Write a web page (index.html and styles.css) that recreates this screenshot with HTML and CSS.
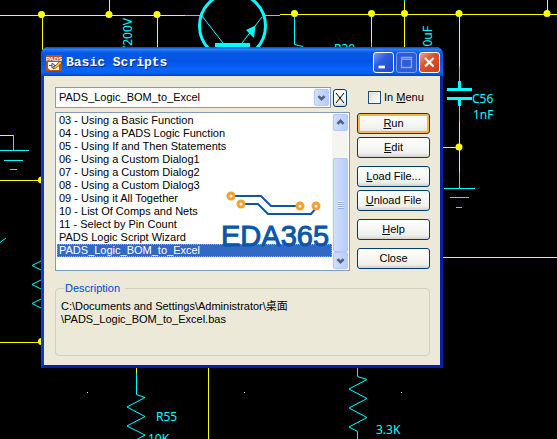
FILE: index.html
```html
<!DOCTYPE html>
<html lang="en">
  <head>
    <meta charset="utf-8">
    <title>Basic Scripts</title>
    <link rel="stylesheet" href="styles.css">
  </head>
  <body>
    <svg class="schematic" viewBox="0 0 557 439" preserveAspectRatio="xMinYMin slice" aria-hidden="true">
      <!-- wires -->
      <g class="wire">
        <path d="M0 15.5H185M280 14.5H557M42.5 15V50M109.5 0V15M157.5 15V50M371.5 15V43M404.5 2V50M459.5 15V66M547.5 0V14"/>
        <path d="M459.5 121V172M440 147.5H459M440 257.5H557M0 135.5H13M0 180.5H41M0 342.5H41M136.5 365V373M208.5 365V439"/>
      </g>
      <g class="node">
        <circle cx="41.5" cy="14.5" r="3.5"/>
        <circle cx="109" cy="14.5" r="3.5"/>
        <circle cx="157" cy="14.5" r="3.5"/>
        <circle cx="294.5" cy="13.5" r="3.5"/>
        <circle cx="371.5" cy="13.5" r="3.5"/>
        <circle cx="404.5" cy="13.5" r="3.5"/>
        <circle cx="459" cy="13.5" r="3.5"/>
        <circle cx="547" cy="13.5" r="3.5"/>
        <circle cx="459" cy="147" r="3.5"/>
        <circle cx="41.5" cy="180" r="3.5"/>
        <circle cx="41.5" cy="341.5" r="3.5"/>
      </g>
      <!-- parts -->
      <g class="part">
        <path d="M185 15.5H200M264 15.5H280M202 16L223 43M242 43L262 17M294.5 17V44.5L303 46.5"/>
        <path d="M371.5 43V50M404.5 0V2M459.5 66V82M459.5 105V121M459.5 172V188M444 188.5H475M450 197.5H469M456 207.5H462"/>
        <path d="M13.5 135V150M0 150.5H29M4 160.5H23M10 169.5H17M0 242.5L6 238"/>
        <path d="M41 261L32 265.5L41 270M41 280L32 284.5L41 289M41 299L32 303.5L41 308"/>
        <path d="M136.5 373V394.5L145 397.5L127 407L145 416.5L127 426L145 435L136 440"/>
        <path d="M357.5 365V376.5L367 379.5L349 389L367 398.5L349 408L367 417.5L349 427L357.5 431.5V439"/>
      </g>
      <circle class="part thick" cx="232.5" cy="26" r="33"/>
      <path class="part thick" d="M447 89.5H472M447 98.5H472M459.5 81V89M459.5 99V106"/>
      <path class="solid" d="M215 43H250V48H215ZM246 30L255.5 25.5L254 38Z"/>
      <g class="label">
        <text x="472" y="103">C56</text>
        <text x="473" y="119">1nF</text>
        <text x="334" y="53">R39</text>
        <text x="156" y="421">R55</text>
        <text x="148" y="443">10K</text>
        <text x="376" y="434">3.3K</text>
        <text transform="translate(132 18) rotate(-90)" text-anchor="end">/200V</text>
        <text transform="translate(432 26) rotate(-90)" text-anchor="end">70uF</text>
      </g>
      <path class="grid-dot" d="M87 392h1v1h-1zM244 392h1v1h-1zM401 392h1v1h-1z"/>
    </svg>

    <main class="desktop">
      <section class="dialog">
        <header class="titlebar">
          <svg class="app-icon" viewBox="0 0 16 16" aria-hidden="true">
            <rect width="16" height="16" fill="#c45010"/>
            <text x="0" y="6" class="app-name">PADS</text>
            <path d="M2 7H13V15H4L2 13Z" fill="#fff"/>
            <path d="M3 10.5H6M6 8V13M6 8L9 10.5L6 13M9 10.5H11" fill="none" stroke="#2a5a80"/>
            <path d="M7 14L8 12L14 6L16 8L10 13Z" fill="#ffc020" stroke="#4a2a00" stroke-width=".6"/>
          </svg>
          <h1>Basic Scripts</h1>
          <button class="win-btn" aria-label="Minimize"><svg viewBox="0 0 21 21"><path d="M5 14H12V17H5Z" fill="#fff"/></svg></button>
          <button class="win-btn dim" aria-label="Maximize" disabled><svg viewBox="0 0 21 21"><path d="M5 5H16V16H5Z M5 7H16" fill="none" stroke="#8aa6ee" stroke-width="1.5"/></svg></button>
          <button class="win-btn close" aria-label="Close window"><svg viewBox="0 0 21 21"><path d="M5.5 5.5L15 15M15 5.5L5.5 15" stroke="#fff" stroke-width="2.4"/></svg></button>
        </header>

        <form class="client">
          <div class="left">
            <div class="picker">
              <div class="combo">
                <select class="combo-select" aria-label="Script">
                  <option>PADS_Logic_BOM_to_Excel</option>
                </select>
                <span class="sb-btn combo-arrow"><svg viewBox="0 0 15 17"><path d="M4 7L7.5 10.5L11 7"/></svg></span>
              </div>
              <button type="button" class="btn clear" aria-label="Delete"><svg viewBox="0 0 12 16"><path d="M2 3L10 13M10 3L2 13" stroke="#000"/></svg></button>
            </div>

            <div class="listbox">
              <select class="list" size="11" aria-label="Scripts">
                <option>03 - Using a Basic Function</option>
                <option>04 - Using a PADS Logic Function</option>
                <option>05 - Using If and Then Statements</option>
                <option>06 - Using a Custom Dialog1</option>
                <option>07 - Using a Custom Dialog2</option>
                <option>08 - Using a Custom Dialog3</option>
                <option>09 - Using it All Together</option>
                <option>10 - List Of Comps and Nets</option>
                <option>11 - Select by Pin Count</option>
                <option>PADS Logic Script Wizard</option>
                <option selected>PADS_Logic_BOM_to_Excel</option>
              </select>
              <div class="scrollbar">
                <span class="sb-btn"><svg viewBox="0 0 15 17"><path d="M4 10L7.5 6.5L11 10"/></svg></span>
                <span class="track"></span>
                <span class="sb-btn thumb"></span>
                <span class="sb-btn"><svg viewBox="0 0 15 17"><path d="M4 7L7.5 10.5L11 7"/></svg></span>
              </div>
              <svg class="logo" viewBox="0 0 116 64" aria-label="EDA365">
                <path d="M14 6H40L50 16H76M24 14H37L47 24H90L96 17" fill="none" stroke="#0a56a8" stroke-width="2"/>
                <g fill="#fff" stroke="#f5a02c" stroke-width="3">
                  <circle cx="10" cy="6" r="3"/>
                  <circle cx="20" cy="14" r="3"/>
                  <circle cx="79" cy="16" r="3"/>
                  <circle cx="95" cy="16" r="3"/>
                </g>
                <text x="0" y="56" class="logo-text">EDA365</text>
              </svg>
            </div>
          </div>

          <div class="right">
            <label class="check"><input type="checkbox"><span>In <u>M</u>enu</span></label>
            <button type="button" class="btn default"><u>R</u>un</button>
            <button type="button" class="btn"><u>E</u>dit</button>
            <button type="button" class="btn apart"><u>L</u>oad File...</button>
            <button type="button" class="btn"><u>U</u>nload File</button>
            <button type="button" class="btn apart"><u>H</u>elp</button>
            <button type="button" class="btn apart">Close</button>
          </div>

          <fieldset class="description">
            <legend>Description</legend>
            <p>C:\Documents and Settings\Administrator\桌面<br>\PADS_Logic_BOM_to_Excel.bas</p>
          </fieldset>
        </form>
      </section>
    </main>
  </body>
</html>
```
FILE: styles.css
```css
* {
  box-sizing: border-box;
}

body {
  margin: 0;
  background: #000;
  color: #000;
  font: 11px/13px "Liberation Sans", "Noto Sans CJK SC", sans-serif;
  overflow: hidden;
}

/* schematic behind the dialog */
.schematic {
  position: absolute;
  top: 0;
  left: 0;
  width: 100%;
  height: 100%;
}

.wire {
  fill: none;
  stroke: #ff0;
}

.node {
  fill: #ff0;
}

.part {
  fill: none;
  stroke: #0ff;
}

.thick {
  stroke-width: 3;
}

.solid {
  fill: #0ff;
}

.label {
  fill: #0ff;
  font: 12px "Noto Sans", sans-serif;
}

.grid-dot {
  fill: #fff;
}

/* window */
.desktop {
  position: relative;
  padding: 47px 114px 0 41px;
}

.dialog {
  background: #ece9d8;
  border: 3px solid #0a3ad8;
  border-top: 0;
  border-right-color: #0320a8;
  border-bottom-color: #0320a8;
  border-radius: 7px 7px 0 0;
}

.titlebar {
  display: flex;
  align-items: center;
  gap: 2px;
  height: 29px;
  margin: 0 -3px;
  padding: 2px 3px 0 5px;
  border-radius: 7px 7px 0 0;
  background: linear-gradient(#0a48c8, #2a80f8 8%, #0558e4 20%, #0354e4 50%, #0666fc 78%, #0560f0 90%, #0240c0);
}

.app-icon {
  width: 16px;
  height: 16px;
}

.app-name {
  fill: #fff;
  font: bold 6px "Liberation Sans", sans-serif;
}

h1 {
  flex: 1;
  margin: 0 0 0 2px;
  color: #fff;
  font: bold 13px/16px "Liberation Mono", monospace;
  text-shadow: 1px 1px #0a2a80;
}

.win-btn {
  width: 21px;
  height: 21px;
  padding: 0;
  border: 1px solid #fff;
  border-radius: 3px;
  background: linear-gradient(135deg, #7a9cf0, #2a5ce0 40%, #1c4ad0);
}

.win-btn svg {
  display: block;
  width: 19px;
  height: 19px;
}

.win-btn.dim {
  border-color: #7c9cec;
  background: #2a5cdc;
}

.win-btn.close {
  background: linear-gradient(135deg, #f0a08c, #e0522c 40%, #c83c14);
}

/* contents */
.client {
  display: grid;
  grid-template-columns: 1fr 73px;
  column-gap: 7px;
  padding: 11px 10px 9px 11px;
}

.picker {
  display: flex;
  align-items: center;
  gap: 2px;
  margin-right: 3px;
}

.combo {
  display: flex;
  flex: 1;
  height: 21px;
  border: 1px solid #7f9db9;
  background: #fff;
}

.combo-select {
  flex: 1;
  min-width: 0;
  padding: 0 3px;
  border: 0;
  appearance: none;
  background: #fff;
  color: #000;
  font: inherit;
}

.sb-btn {
  width: 15px;
  height: 17px;
  border: 1px solid #b4c8f4;
  border-radius: 2px;
  background: linear-gradient(90deg, #d0defe, #b8ccfa);
}

.sb-btn svg {
  display: block;
  width: 100%;
  height: 100%;
  fill: none;
  stroke: #4d6185;
  stroke-width: 3;
}

.combo-arrow {
  margin: 1px;
}

.listbox {
  position: relative;
  display: flex;
  height: 159px;
  margin-top: 4px;
  padding: 1px;
  border: 1px solid #7f9db9;
  background: #fff;
}

.list {
  flex: 1;
  min-width: 0;
  height: 145px;
  padding: 0;
  border: 0;
  outline: 0;
  overflow: hidden;
  background: #fff;
  font: inherit;
}

.list option {
  height: 13px;
  min-height: 13px;
  padding: 0 2px;
  color: #000;
  line-height: 13px;
}

.list option:checked {
  background: linear-gradient(#316ac5, #316ac5);
  outline: 1px dotted #e8a030;
  outline-offset: -1px;
  -webkit-text-fill-color: #fff;
}

.scrollbar {
  display: flex;
  flex-direction: column;
  width: 16px;
  padding-left: 1px;
  background: #f5f5f0;
}

.track {
  flex: 1;
}

.thumb {
  height: 94px;
  background:
    repeating-linear-gradient(#eef4fe 0 1px, #8cb0f8 1px 2px) center / 6px 8px no-repeat,
    linear-gradient(90deg, #d0defe, #b8ccfa);
}

.logo {
  position: absolute;
  right: 12px;
  bottom: 16px;
  width: 116px;
  height: 64px;
  pointer-events: none;
}

.logo-text {
  fill: #0a56a8;
  stroke: #0a56a8;
  font: 29px "Liberation Sans", sans-serif;
}

.right {
  display: flex;
  flex-direction: column;
  gap: 3px;
}

.check {
  display: flex;
  align-items: center;
  gap: 3px;
  height: 20px;
  margin: 0 0 3px 11px;
  white-space: nowrap;
}

.check input {
  width: 13px;
  height: 13px;
  margin: 0;
  appearance: none;
  border: 1px solid #1c5180;
  background: linear-gradient(135deg, #dcdcd7, #fff);
}

.btn {
  height: 21px;
  padding: 0;
  border: 1px solid #003c74;
  border-radius: 3px;
  background: linear-gradient(#fff, #f0f0ea 80%, #d6d0c5);
  color: #000;
  font: inherit;
}

.btn.apart {
  margin-top: 5px;
}

.btn.default {
  box-shadow: inset 0 0 0 2px #f5b848;
}

.clear {
  width: 14px;
  height: 18px;
}

.clear svg {
  display: block;
  width: 12px;
  height: 16px;
}

.description {
  grid-column: 1 / -1;
  min-width: 0;
  margin: 11px 0 0;
  padding: 5px 5px 29px;
  border: 1px solid #d0d0bf;
  border-radius: 4px;
}

legend {
  margin-left: 3px;
  padding: 0 5px 0 1px;
  color: #0046d5;
}

.description p {
  margin: 0;
}
```
